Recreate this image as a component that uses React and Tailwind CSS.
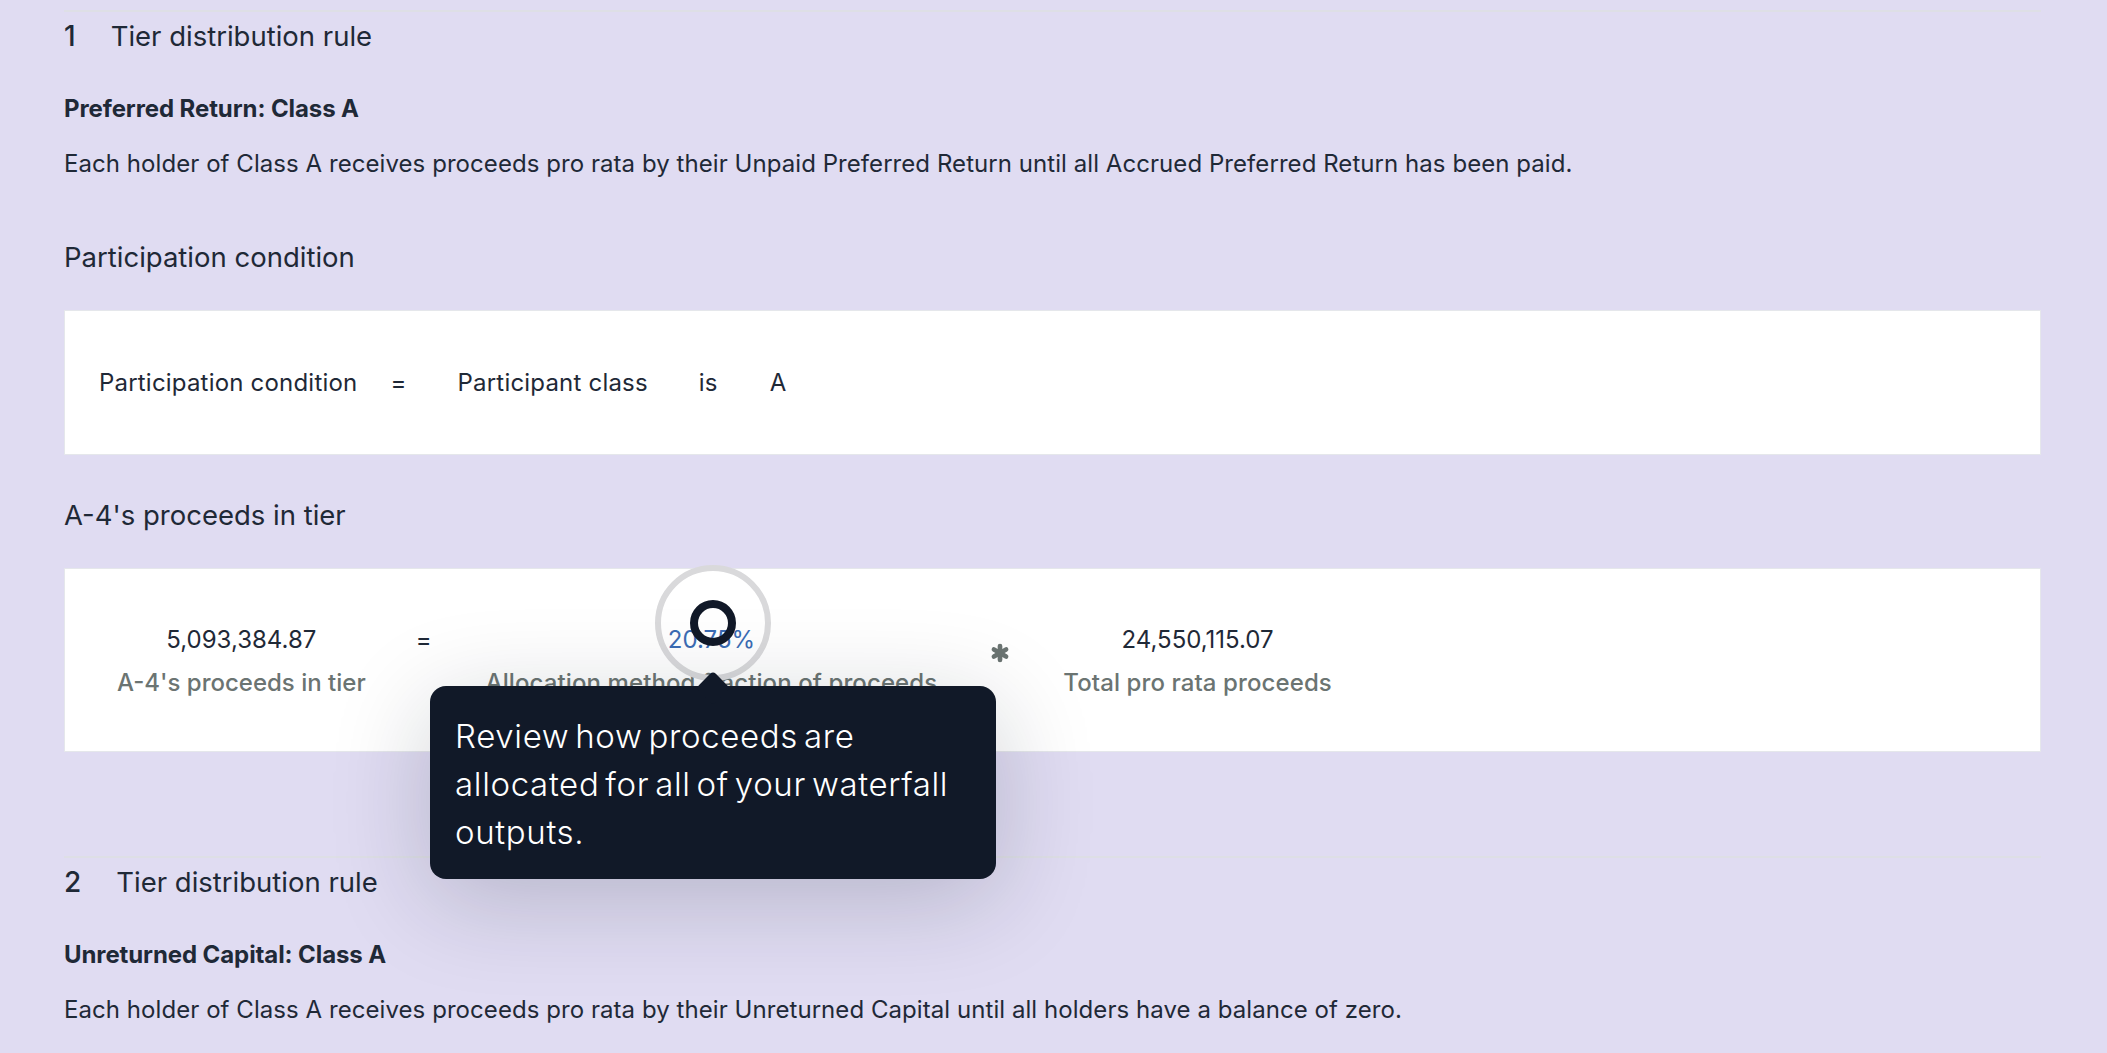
import React from "react";
import { Asterisk } from "lucide-react";

function TierHeading({ num, title }) {
  return (
    <div className="border-t-2 border-[#dedfe6] h-[50px] flex items-center">
      <span className="text-[28px] font-medium text-[#1f2937] mr-[35px] leading-[48px]">{num}</span>
      <span className="text-[27.5px] text-[#1f2937] leading-[48px]">{title}</span>
    </div>
  );
}

function Rule({ title, children }) {
  return (
    <>
      <h4 className="mt-[31px] text-[24px] font-bold tracking-[-0.1px] leading-[36px] text-[#1f2937]">{title}</h4>
      <p className="mt-[19px] text-[24px] tracking-[0.06px] leading-[36px] text-[#1f2937]">{children}</p>
    </>
  );
}

function Term({ value, label, valueClass = "text-[#1f2937]", labelClass = "tracking-[0.1px]", className = "" }) {
  return (
    <div className={`flex flex-col items-center ${className}`}>
      <span className={`text-[24px] leading-[36px] ${valueClass}`}>{value}</span>
      <span className={`mt-[7px] text-[24px] font-medium leading-[36px] text-[#6b7472] ${labelClass}`}>{label}</span>
    </div>
  );
}

export default function App() {
  return (
    <div className="relative h-[1053px] overflow-hidden bg-[#e0dcf2] pl-16 pr-[66px] pt-[10px] font-['Inter',sans-serif]">
      <TierHeading num="1" title="Tier distribution rule" />
      <Rule title="Preferred Return: Class A">
        Each holder of Class A receives proceeds pro rata by their Unpaid Preferred Return until all Accrued Preferred Return has been paid.
      </Rule>

      <h3 className="mt-[55px] text-[27.5px] leading-[40px] text-[#1f2937]">Participation condition</h3>
      <div className="mt-[33px] h-[145px] bg-white border border-[#e5e7eb] px-[34px] flex items-center text-[24px] tracking-[0.2px] text-[#1f2937]">
        <span>Participation condition</span>
        <span className="ml-[33px]">=</span>
        <span className="ml-[51px]">Participant class</span>
        <span className="ml-[51px]">is</span>
        <span className="ml-[52px]">A</span>
      </div>

      <h3 className="mt-[40px] text-[27.5px] leading-[40px] text-[#1f2937]">A-4's proceeds in tier</h3>
      <div className="mt-[33px] h-[184px] bg-white border border-[#e5e7eb] pl-[52px] flex items-start pt-[53px]">
        <Term value="5,093,384.87" label="A-4's proceeds in tier" labelClass="" />
        <span className="ml-[50px] text-[24px] leading-[36px] text-[#1f2937]">=</span>
        <Term value="20.75%" label="Allocation method fraction of proceeds" valueClass="text-[#3b6cb4]" className="ml-[54px]" />
        <Asterisk size={28} strokeWidth={4} className="ml-[49px] mt-[17px] text-[#6b7472]" />
        <Term value="24,550,115.07" label="Total pro rata proceeds" className="ml-[49px]" />
      </div>

      <div className="mt-[104px]">
        <TierHeading num="2" title="Tier distribution rule" />
        <Rule title="Unreturned Capital: Class A">
          Each holder of Class A receives proceeds pro rata by their Unreturned Capital until all holders have a balance of zero.
        </Rule>
      </div>

      {/* walkthrough hotspot + tooltip */}
      <div className="absolute left-[655px] top-[565px] w-[116px] h-[116px] rounded-full border-[6px] border-[#d9d9db] bg-transparent" />
      <div className="absolute left-[690px] top-[600px] w-[46px] h-[46px] rounded-full border-[8px] border-[#111928]" />
      <div className="absolute left-[430px] top-[686px] w-[566px] h-[193px] rounded-2xl bg-[#111928] pl-[25px] pr-6 pt-[26px] text-[33px] leading-[48px] font-light tracking-[0.65px] [word-spacing:-4px] text-white shadow-[0_20px_100px_rgba(17,25,40,0.2)]">
        <div className="absolute left-[271px] -top-[10px] w-[24px] h-[24px] rotate-45 rounded-[4px] bg-[#111928]" />
        <p className="relative">Review how proceeds are allocated for all of your waterfall outputs.</p>
      </div>
    </div>
  );
}
